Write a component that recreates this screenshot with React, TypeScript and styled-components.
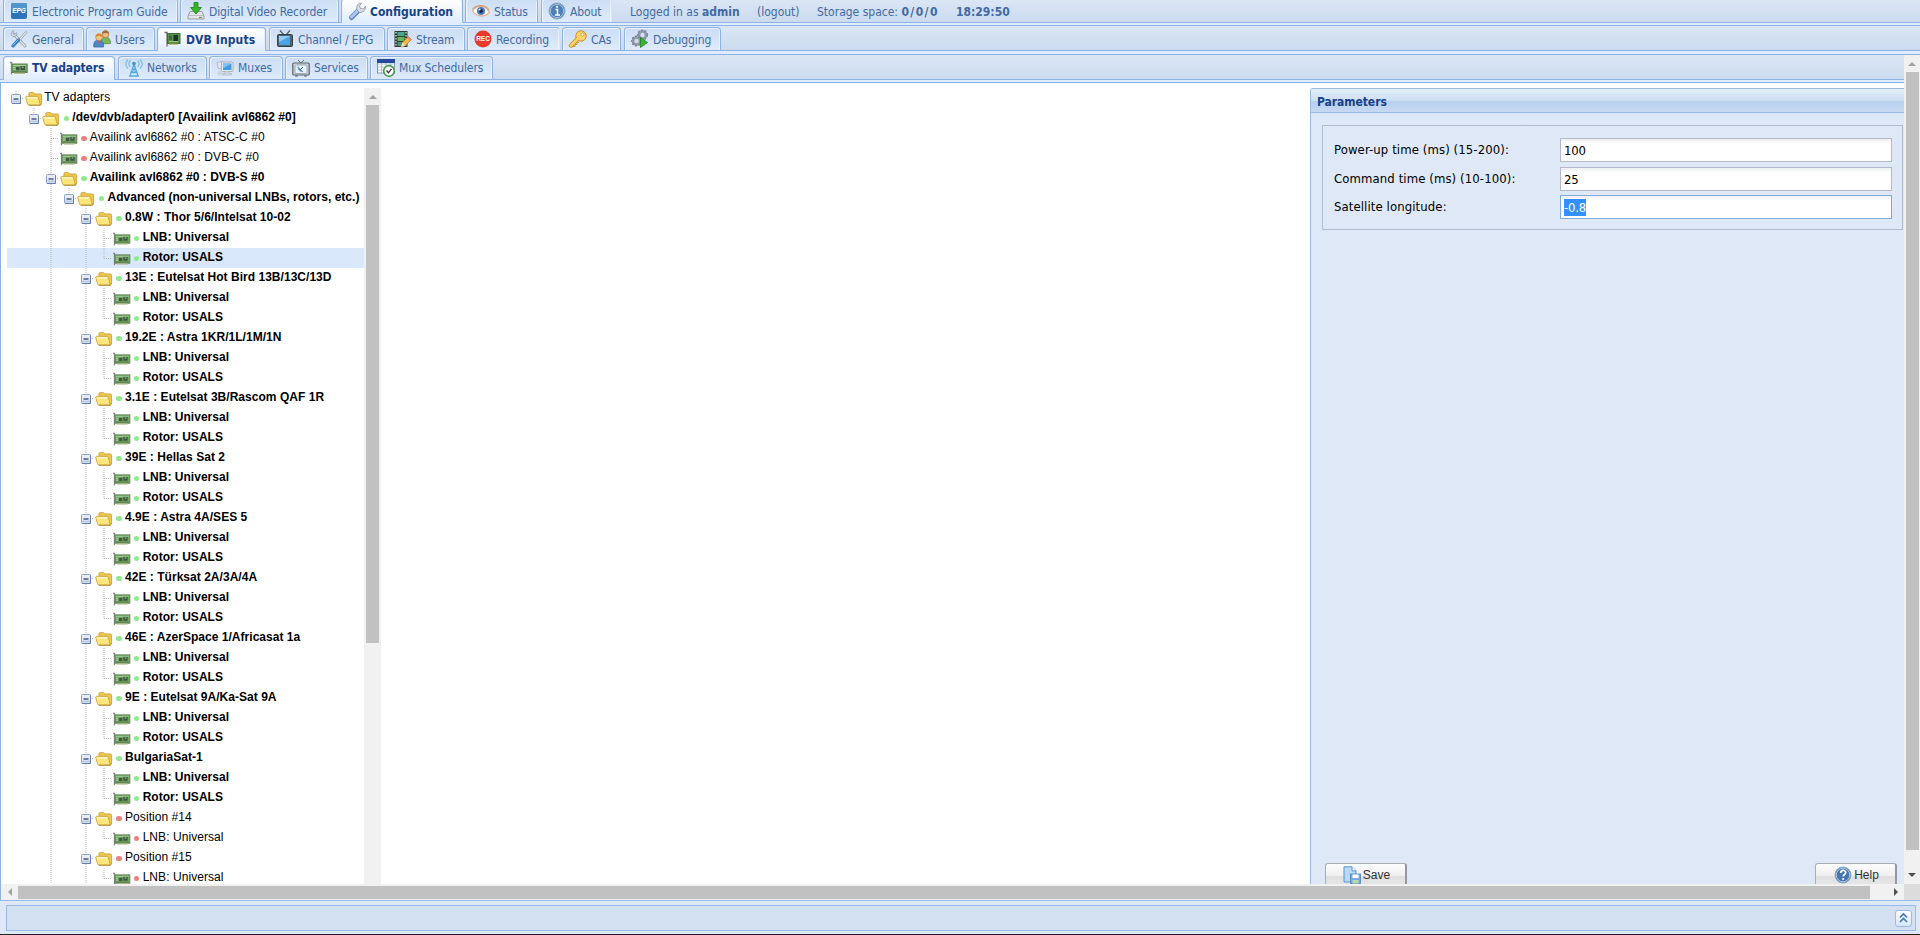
import React from "react";
import styled, { createGlobalStyle, css } from "styled-components";

const Global = createGlobalStyle`
  * { box-sizing: border-box; }
  html, body { margin: 0; padding: 0; overflow: hidden; background: #fff; }
`;

const ui = `"DejaVu Sans Condensed", "DejaVu Sans", sans-serif`;
const treeFont = `"Liberation Sans", Arial, sans-serif`;

const Page = styled.div`
  display: flex;
  flex-direction: column;
  width: 1920px;
  height: 935px;
  overflow: hidden;
  background: #dfe8f6;
  font: 12px ${ui};
`;

const Bar = styled.div<{ $h: number }>`
  display: flex;
  align-items: flex-end;
  flex: none;
  height: ${(p) => p.$h}px;
  padding-left: 3px;
  background: linear-gradient(#dbe6f5, #cbdbef);
  border-bottom: 1px solid #8db2e3;
`;

const Strip = styled.div<{ $h: number }>`
  flex: none;
  height: ${(p) => p.$h}px;
  background: #deecfd;
  border-bottom: 1px solid #8db2e3;
`;

const Tab = styled.div<{ $w: number; $gap: number; $active?: boolean; $h: number; $open?: boolean }>`
  display: flex;
  align-items: center;
  flex: none;
  width: ${(p) => p.$w}px;
  height: ${(p) => p.$h}px;
  margin-right: ${(p) => p.$gap}px;
  padding-left: 6px;
  border: 1px solid #8db2e3;
  border-bottom: 0;
  border-radius: 4px 4px 0 0;
  color: #416aa3;
  white-space: nowrap;
  background: linear-gradient(#ccddf3, #deebfc);
  box-shadow: inset 1px 1px 0 #e9f2fd, inset -1px 0 0 #e9f2fd;
  ${(p) => p.$open && css`border-right-color: transparent;`}
  ${(p) =>
    p.$active &&
    css`
      color: #15428b;
      font-weight: bold;
      height: ${p.$h + 1}px;
      margin-bottom: -1px;
      padding-bottom: 1px;
      background: linear-gradient(#fff, #f4f8fe 40%, #deecfd);
    `}
`;

const TabText = styled.span<{ $ls: number; $low?: boolean }>`
  margin-left: 4px;
  margin-top: ${(p) => (p.$low ? 2 : 0)}px;
  letter-spacing: ${(p) => p.$ls}px;
`;

const Info = styled.div<{ $w: number; $indent?: number }>`
  flex: none;
  width: ${(p) => p.$w}px;
  height: 22px;
  margin-left: ${(p) => p.$indent ?? 0}px;
  line-height: 24px;
  color: #416aa3;
  white-space: nowrap;
`;
const Quota = styled.b`
  letter-spacing: 1.4px;
`;

const Svg = styled.svg`
  flex: none;
  display: block;
  overflow: visible;
`;

const Body = styled.div`
  display: flex;
  flex: none;
  height: 845px;
`;
const Main = styled.div`
  display: flex;
  flex-direction: column;
  width: 1904px;
  height: 845px;
`;
const Content = styled.div`
  display: flex;
  flex: none;
  height: 801px;
  padding-top: 5px;
  background: #fff;
  border-left: 1px solid #8db2e3;
  overflow: hidden;
`;

const Tree = styled.div`
  width: 357px;
  margin-left: 6px;
  flex: none;
  font: 12px ${treeFont};
  color: #000;
`;
const Row = styled.div<{ $sel?: boolean }>`
  display: flex;
  align-items: center;
  height: 20px;
  white-space: nowrap;
  background: ${(p) => (p.$sel ? "#d9e8fb" : "transparent")};
`;
const Cell = styled.div`
  flex: none;
  width: 17.6px;
  height: 20px;
`;
const NodeIcon = styled.div`
  flex: none;
  width: 17.6px;
  padding-top: 1px;
`;
const Dot = styled.span<{ $c: string }>`
  flex: none;
  width: 5.5px;
  height: 5.5px;
  margin: 1px 3.2px 0 3.8px;
  border-radius: 50%;
  background: ${(p) => p.$c};
`;
const Label = styled.span<{ $bold?: boolean; $root?: boolean }>`
  font-weight: ${(p) => (p.$bold ? "bold" : "normal")};
  margin-left: ${(p) => (p.$root ? 2 : 0)}px;
  letter-spacing: ${(p) => (p.$bold ? 0.03 : 0.06)}px;
  line-height: 18px;
  padding-bottom: 2px;
`;

const VScroll = styled.div<{ $w: number; $h: number }>`
  display: flex;
  flex-direction: column;
  align-items: center;
  flex: none;
  width: ${(p) => p.$w}px;
  height: ${(p) => p.$h}px;
  background: #f1f1f1;
`;
const HScroll = styled.div`
  display: flex;
  align-items: center;
  flex: none;
  height: 16px;
  background: #f1f1f1;
  border-left: 1px solid #8db2e3;
`;
const ArrowBox = styled.div<{ $w: number; $h: number }>`
  display: flex;
  align-items: center;
  justify-content: center;
  flex: none;
  width: ${(p) => p.$w}px;
  height: ${(p) => p.$h}px;
`;
const Thumb = styled.div<{ $w: number; $h: number }>`
  flex: none;
  width: ${(p) => p.$w}px;
  height: ${(p) => p.$h}px;
  background: #c1c1c1;
`;
const Grow = styled.div`
  flex: 1;
`;
const Corner = styled.div`
  width: 16px;
  height: 16px;
  background: #dcdcdc;
`;

const Panel = styled.div`
  display: flex;
  flex-direction: column;
  width: 594px;
  height: 820px;
  margin-left: auto;
  border: 1px solid #99bbe8;
  border-right: 0;
  border-top-left-radius: 3px;
  background: #dfe8f6;
`;
const PanelHead = styled.div`
  height: 24px;
  flex: none;
  padding-left: 6px;
  line-height: 26px;
  font-weight: bold;
  letter-spacing: -0.05px;
  color: #15428b;
  background: linear-gradient(#e3effd, #cddef3 50%, #b8cfee 51%, #c6d9f1);
  border-bottom: 1px solid #99bbe8;
`;
const PanelBody = styled.div`
  display: flex;
  flex-direction: column;
  height: 772px;
  padding: 12px 1px 0 11px;
  background: linear-gradient(#dbe7f8, #dfe8f6 12px);
`;
const FieldSet = styled.div`
  display: flex;
  flex-direction: column;
  gap: 4.5px;
  width: 581px;
  height: 105px;
  padding: 12px 10px 0 11px;
  border: 1px solid #b0bbd0;
  font-size: 13px;
`;
const Field = styled.div`
  display: flex;
  height: 24px;
  color: #000;
`;
const FieldName = styled.label`
  width: 226px;
  flex: none;
  line-height: 24px;
  letter-spacing: 0.1px;
`;
const Input = styled.div<{ $focus?: boolean }>`
  display: flex;
  align-items: center;
  width: 332px;
  height: 24px;
  padding: 1px 0 0 3px;
  border: 1px solid ${(p) => (p.$focus ? "#7eadd9" : "#b5b8c8")};
  background: linear-gradient(#eef0f1, #fff 5px);
  letter-spacing: -0.2px;
`;
const Picked = styled.span`
  background: #3390ff;
  color: #fff;
  line-height: 17px;
`;
const Buttons = styled.div`
  display: flex;
  justify-content: space-between;
  margin-top: auto;
  padding: 0 6px 0 3px;
  height: 22px;
  overflow: hidden;
`;
const Button = styled.div`
  display: flex;
  align-items: center;
  justify-content: center;
  gap: 2px;
  width: 82px;
  height: 26px;
  padding: 0 0 3px 2px;
  border: 1px solid #a9adb5;
  border-right: 2px solid #9297a2;
  border-radius: 3px;
  font: 12px ${treeFont};
  color: #333;
  background: linear-gradient(#fdfdfd, #efefef 50%, #dfdfdf 51%, #e8e8e8);
`;

const Footer = styled.div`
  display: flex;
  flex: none;
  height: 34px;
  padding: 4px 4px 3px 6px;
  border-top: 1px solid #99bbe8;
  background: #dfe8f6;
`;
const FooterBox = styled.div`
  display: flex;
  align-items: center;
  justify-content: flex-end;
  width: 1910px;
  height: 26px;
  padding-right: 3px;
  border: 1px solid #99bbe8;
  background: #d2e0f2;
`;
const Expand = styled.div`
  display: flex;
  align-items: center;
  justify-content: center;
  width: 17px;
  height: 17px;
  border: 1px solid #99bbe8;
  border-radius: 3px;
  background: linear-gradient(#fff, #d5e4f7);
`;
const BottomEdge = styled.div`
  flex: none;
  height: 1px;
  background: #1f1f2b;
`;

const art: Record<string, React.ReactNode> = {
  epg: (
    <>
      <rect x="1" y="1" width="16" height="16" rx="2" fill="#2e74b8" />
      <rect x="1" y="1" width="16" height="8" rx="2" fill="#5294cd" />
      <text x="9" y="10.5" textAnchor="middle" fontSize="6.500" fontWeight="bold" fontStyle="italic" fill="#fff" fontFamily="Liberation Sans">EPG</text>
    </>
  ),
  dvr: (
    <>
      <path d="M3 9.500h12l2 4.500v3H1v-3z" fill="#e4e4e6" stroke="#999ca3" />
      <path d="M2 13.500h14" stroke="#bcbec4" />
      <path d="M12 15.500h3" stroke="#58a648" strokeWidth="1.200" />
      <path d="M7 .5h4v5h3.500L9 12 3.500 5.500H7z" fill="#38b52b" stroke="#168013" strokeWidth=".8" />
    </>
  ),
  wrench: (
    <>
      <path d="M3.500 15.500L11 8" stroke="#5b86c0" strokeWidth="5" strokeLinecap="round" />
      <path d="M3.500 15L10.500 8" stroke="#a9c8ee" strokeWidth="3" strokeLinecap="round" />
      <path d="M9 8C8 4 10 1 13.500 1L11.500 4l1 2.500 3 .5L17.500 4c.5 4-2 6.500-6 6.500z" fill="#dadde2" stroke="#8f959e" strokeWidth=".8" />
    </>
  ),
  eye: (
    <>
      <path d="M.5 9C4 3 13 2 17.500 10 14 15.500 5 15.500.5 9z" fill="#fff" stroke="#dfb08a" strokeWidth="1.300" />
      <path d="M.5 7.500C4 2.500 13 2 17 8" fill="none" stroke="#d4a17c" strokeWidth="1.200" />
      <circle cx="9" cy="9" r="4" fill="#4e78bd" />
      <circle cx="9" cy="9" r="1.900" fill="#14264d" />
      <circle cx="7.700" cy="7.600" r=".9" fill="#fff" />
    </>
  ),
  info: (
    <>
      <circle cx="9" cy="9" r="8" fill="#4f7fb8" stroke="#8aa6c8" />
      <circle cx="9" cy="9" r="6.700" fill="none" stroke="#c1d5ea" strokeWidth=".8" />
      <path d="M7.500 7.500h2V13M7 13h5" stroke="#fff" strokeWidth="1.500" fill="none" />
      <circle cx="9" cy="4.800" r="1.100" fill="#fff" />
    </>
  ),
  tools: (
    <>
      <path d="M4 4.500L15 16" stroke="#8b949d" strokeWidth="2.800" strokeLinecap="round" />
      <path d="M4 4.500L15 16" stroke="#e3e7ea" strokeWidth="1.500" strokeLinecap="round" />
      <path d="M3.800.8C.5 1.300.3 5.500 3 6.500c2.500.8 4.500-1.500 3.700-3.700L4.700 4.600 2.800 3.500z" fill="#dbdfe3" stroke="#89929b" strokeWidth=".7" />
      <path d="M8.500 9.500L15.500 1.500l1.500 1-7 8z" fill="#e5e8ea" stroke="#8b949d" strokeWidth=".7" />
      <path d="M8.500 10L3 15.800" stroke="#3d83c9" strokeWidth="3.400" strokeLinecap="round" />
      <path d="M8 10L3 15" stroke="#89bdeb" strokeWidth="1" strokeLinecap="round" />
    </>
  ),
  users: (
    <>
      <path d="M8.500 14c-1-5 1-7 4-7s5 2 5 6.500z" fill="#78b75c" stroke="#4c8a38" strokeWidth=".7" />
      <circle cx="12.500" cy="4.500" r="3.300" fill="#e9bd83" stroke="#986735" strokeWidth=".6" />
      <path d="M9 4c0-5 7-5 7 0-2-1.500-4-1.500-7 0z" fill="#a06c32" />
      <path d="M.8 17c-.5-5 1.500-7 4.700-7s5.500 2 5 7z" fill="#4d87cf" stroke="#2d5e9e" strokeWidth=".7" />
      <path d="M5 10.500l1 5 1.500-5z" fill="#dc5140" />
      <circle cx="6" cy="7.500" r="3.300" fill="#f0c68f" stroke="#a77531" strokeWidth=".6" />
      <path d="M2.500 7c0-5 7-5 7 0-2-1.500-4-1.500-7 0z" fill="#d98f2a" />
    </>
  ),
  card: (
    <>
      <path d="M.5 2.500h2.500v14" fill="none" stroke="#6b6f73" strokeWidth="1.300" />
      <rect x="3.500" y="3.500" width="12.500" height="10" fill="#5b9148" stroke="#3b6d36" />
      <rect x="9.500" y="5" width="4.500" height="6" fill="#1f3325" />
      <rect x="5" y="5.500" width="3" height="4.500" fill="#3f6a3b" />
      <path d="M5 11.500h9" stroke="#9cc886" />
      <path d="M5 14.200h9" stroke="#c9b55d" strokeWidth="1.200" />
    </>
  ),
  nic: (
    <>
      <path d="M0 3.500h1.500V15.500" fill="none" stroke="#85898c" strokeWidth="1.300" />
      <rect x="2" y="5" width="15.200" height="8.500" fill="#79a767" stroke="#5d8159" strokeWidth="1" />
      <path d="M3 6.500h13M3 8.500h2.500M3 10.500h2.500" stroke="#b4d6a0" strokeWidth=".8" />
      <rect x="6" y="8" width="3.500" height="3.200" fill="#3c5941" />
      <rect x="10.500" y="7" width="4.500" height="4" fill="#3c5941" />
      <path d="M12 8.200h1.500" stroke="#c9d6c4" />
      <path d="M3 12.300h13" stroke="#4c6f49" strokeWidth=".8" />
      <path d="M4 14.300h11" stroke="#bdb983" strokeWidth="1.300" />
    </>
  ),
  tv: (
    <>
      <path d="M4 .5L8 5M14 .5L10 5" stroke="#555c64" strokeWidth="1.200" />
      <rect x="1.500" y="4.500" width="15" height="12" rx="1" fill="#50616f" stroke="#35434e" />
      <rect x="3" y="6" width="11" height="9" fill="#4ca3e2" />
      <path d="M3 6h11L3 12z" fill="#93cdf3" />
    </>
  ),
  film: (
    <>
      <rect x=".5" y="1" width="13" height="16" fill="#2f3d33" />
      <path d="M2 2v14M12 2v14" stroke="#e6e9e4" strokeDasharray="1.500 1.500" strokeWidth="1.200" />
      <rect x="3.500" y="2" width="7" height="4" fill="#4aa98b" />
      <rect x="3.500" y="7" width="7" height="4" fill="#61b759" />
      <rect x="3.500" y="12" width="7" height="4" fill="#44947f" />
      <path d="M7 17l1.500-4.500 6-6 3 3-6 6z" fill="#f1b84b" stroke="#ae762b" strokeWidth=".8" />
      <path d="M13 8l3 3 1.500-1.500-3-3z" fill="#e98f86" />
      <path d="M7 17l1.500-4.500 3 3z" fill="#f8e3b9" />
    </>
  ),
  rec: (
    <>
      <circle cx="9" cy="9" r="8.500" fill="#e8392a" />
      <text x="9" y="11.300" textAnchor="middle" fontSize="6.500" fontWeight="bold" fill="#fff" fontFamily="Liberation Sans">REC</text>
    </>
  ),
  key: (
    <>
      <path d="M9.500 8L2 15.500" stroke="#c88f24" strokeWidth="4.500" strokeLinecap="round" />
      <path d="M3 16.500h3v-2h2v-2h2" fill="none" stroke="#cd9629" />
      <circle cx="12" cy="6" r="5.200" fill="#fbd46b" stroke="#c88f24" />
      <path d="M9.500 8L2 15.500" stroke="#fcd265" strokeWidth="2.700" strokeLinecap="round" />
      <circle cx="13.500" cy="4.500" r="1.600" fill="#fff" stroke="#c88f24" strokeWidth=".8" />
    </>
  ),
  gears: (
    <>
      <circle cx="11.500" cy="5" r="3.500" fill="none" stroke="#9297a9" strokeWidth="2.600" />
      <circle cx="11.500" cy="5" r="4.900" fill="none" stroke="#777d92" strokeWidth="1.200" strokeDasharray="2 1.500" />
      <circle cx="5.500" cy="11" r="3.500" fill="#d7d9e3" stroke="#9297a9" strokeWidth="2.600" />
      <circle cx="5.500" cy="11" r="4.900" fill="none" stroke="#777d92" strokeWidth="1.200" strokeDasharray="2 1.500" />
      <path d="M9.500 7.500l7 5-7 5z" fill="#3cb43a" stroke="#1b7f23" strokeWidth=".8" />
    </>
  ),
  antenna: (
    <>
      <path d="M9 5L5 17M9 5l4 12M7 10h4M6 13.500h6.500M7.500 10l5 3.500M10.500 10l-5 3.500M4 17h10" stroke="#55a9de" strokeWidth="1.300" fill="none" />
      <circle cx="9" cy="4.500" r="1.800" fill="#3f94d3" />
      <path d="M5.500 1.500c-2 2-2 4.500 0 6.500M3 .5c-3 3-3 6 0 9M12.500 1.500c2 2 2 4.500 0 6.500M15 .5c3 3 3 6 0 9" stroke="#75bfea" strokeWidth="1.200" fill="none" />
    </>
  ),
  mux: (
    <>
      <path d="M1 3.500l6-1.500-1 8-4-1z" fill="#e2e5e8" stroke="#aeb4bb" strokeWidth=".8" />
      <rect x="5.500" y="3" width="11.500" height="9.500" rx="1" fill="#e7edf4" stroke="#a6b0bb" />
      <rect x="7" y="4.500" width="8.500" height="6.500" fill="#3e9ae2" />
      <path d="M7 4.500h8.500L7 9.500z" fill="#80c2f3" />
      <path d="M9 12.500v2H6.500v1.500h9v-1.500H13v-2" fill="#d3d8de" stroke="#a6b0bb" strokeWidth=".6" />
      <circle cx="4" cy="14" r="2.500" fill="#cfd6de" />
    </>
  ),
  services: (
    <>
      <path d="M6 1l3 3 3-3" fill="none" stroke="#676d74" />
      <rect x=".8" y="4" width="16.400" height="12" rx="1" fill="#d3d9df" stroke="#5a6269" strokeWidth="1.200" />
      <rect x="3" y="6" width="12" height="8.500" rx="1" fill="#e8f3fc" stroke="#8090a0" strokeWidth=".7" />
      <path d="M5.500 7c0 4 2.500 6 6 6z" fill="#4f93cb" />
      <path d="M8 11l3-3" stroke="#35648f" />
      <path d="M3 17h3M12 17h3" stroke="#5a6269" />
    </>
  ),
  schedule: (
    <>
      <rect x=".5" y="1" width="17" height="13" fill="#fff" stroke="#8695b2" />
      <path d="M.5 5h17M.5 8h17M.5 11h17M4.500 2v12M9 2v12M13.500 2v12" stroke="#9fb2d2" strokeWidth=".8" />
      <rect x="0" y="0" width="18" height="4" fill="#284a9e" />
      <circle cx="12" cy="12" r="5.300" fill="#fff" stroke="#4b9a4c" strokeWidth="1.700" />
      <path d="M9.500 11.500l2 2.300 3-4" fill="none" stroke="#323c37" strokeWidth="1.300" />
    </>
  ),
  folder: (
    <>
      <path d="M4 6V4c0-1 .5-1.500 1.500-1.500h3L10 4h5.500c1 0 1.500.5 1.500 1.500V14l-2 1.500z" fill="#efc64c" stroke="#c79b35" strokeWidth=".8" />
      <path d="M.7 7.500c0-.7.300-1 1-1h10.800c.7 0 1 .3 1.200 1l2 7.800H4c-.8 0-1.200-.3-1.400-1z" fill="#fbe67c" stroke="#c79b35" strokeWidth=".8" />
      <path d="M2 8h10.500" stroke="#fffadb" strokeWidth="1.300" />
      <path d="M4 15.700h11.500l1.600-1.500" fill="none" stroke="#b3862a" strokeWidth=".9" />
    </>
  ),
  save: (
    <>
      <path d="M1 .8h8l4 4V16H1z" fill="#b9d9f5" stroke="#5d92cc" />
      <path d="M9 .8v4h4" fill="#fff" stroke="#5d92cc" />
      <rect x="7.500" y="8" width="10" height="9.500" fill="#7ba7df" stroke="#4f80c0" strokeWidth=".8" />
      <rect x="9.500" y="8.500" width="6" height="3.500" fill="#fff" />
      <rect x="9.500" y="14" width="6" height="3.500" fill="#b7dba6" />
    </>
  ),
  help: (
    <>
      <circle cx="9" cy="9" r="8" fill="#4777ae" stroke="#8ba5c5" />
      <circle cx="9" cy="9" r="6.800" fill="none" stroke="#c6d7ea" strokeWidth=".9" />
      <path d="M6.700 7c0-3.500 5-3.500 5-.5 0 2-2.500 2-2.500 4" fill="none" stroke="#fff" strokeWidth="1.700" />
      <circle cx="9.200" cy="13" r="1.100" fill="#fff" />
    </>
  ),
};

const Icon = ({ name, size = 18 }: { name: string; size?: number }) => (
  <Svg width={size} height={size} viewBox="0 0 18 18">{art[name]}</Svg>
);

type Item = { t: string; i: string; w: number; gap?: number; ls?: number; on?: boolean; open?: boolean };

const Tabs = ({ items, h, low }: { items: Item[]; h: number; low?: boolean }) => (
  <>
    {items.map((x) => (
      <Tab key={x.t} $w={x.w} $gap={x.gap ?? 2} $active={x.on} $open={x.open} $h={h}>
        <Icon name={x.i} />
        <TabText $ls={x.ls ?? -0.1} $low={low}>{x.t}</TabText>
      </Tab>
    ))}
  </>
);

const top: Item[] = [
  { t: "Electronic Program Guide", i: "epg", w: 175, ls: -0.07 },
  { t: "Digital Video Recorder", i: "dvr", w: 159 },
  { t: "Configuration", i: "wrench", w: 122, on: true, ls: 0 },
  { t: "Status", i: "eye", w: 73, gap: 3 },
  { t: "About", i: "info", w: 71, open: true },
];
const config: Item[] = [
  { t: "General", i: "tools", w: 81 },
  { t: "Users", i: "users", w: 69 },
  { t: "DVB Inputs", i: "card", w: 109, gap: 3, on: true, ls: 0.12 },
  { t: "Channel / EPG", i: "tv", w: 116 },
  { t: "Stream", i: "film", w: 78 },
  { t: "Recording", i: "rec", w: 93, open: true },
  { t: "CAs", i: "key", w: 59, gap: 3 },
  { t: "Debugging", i: "gears", w: 97 },
];
const dvb: Item[] = [
  { t: "TV adapters", i: "nic", w: 112, gap: 3, on: true, ls: -0.13 },
  { t: "Networks", i: "antenna", w: 89 },
  { t: "Muxes", i: "mux", w: 74 },
  { t: "Services", i: "services", w: 83 },
  { t: "Mux Schedulers", i: "schedule", w: 123 },
];

type Node = { d: number; t: string; on?: boolean; plain?: boolean; leaf?: boolean; last?: boolean; sel?: boolean };

const satellites = [
  "0.8W : Thor 5/6/Intelsat 10-02",
  "13E : Eutelsat Hot Bird 13B/13C/13D",
  "19.2E : Astra 1KR/1L/1M/1N",
  "3.1E : Eutelsat 3B/Rascom QAF 1R",
  "39E : Hellas Sat 2",
  "4.9E : Astra 4A/SES 5",
  "42E : Türksat 2A/3A/4A",
  "46E : AzerSpace 1/Africasat 1a",
  "9E : Eutelsat 9A/Ka-Sat 9A",
  "BulgariaSat-1",
];

const nodes: Node[] = [
  { d: 0, t: "TV adapters", plain: true, last: true },
  { d: 1, t: "/dev/dvb/adapter0 [Availink avl6862 #0]", on: true, last: true },
  { d: 2, t: "Availink avl6862 #0 : ATSC-C #0", leaf: true },
  { d: 2, t: "Availink avl6862 #0 : DVB-C #0", leaf: true },
  { d: 2, t: "Availink avl6862 #0 : DVB-S #0", on: true },
  { d: 3, t: "Advanced (non-universal LNBs, rotors, etc.)", on: true, last: true },
  ...satellites.flatMap((t, i): Node[] => [
    { d: 4, t, on: true },
    { d: 5, t: "LNB: Universal", on: true, leaf: true },
    { d: 5, t: "Rotor: USALS", on: true, leaf: true, last: true, sel: i === 0 },
  ]),
  ...["Position #14", "Position #15"].flatMap((t): Node[] => [
    { d: 4, t },
    { d: 5, t: "LNB: Universal", leaf: true, last: true },
  ]),
];

const Dots = ({ d }: { d: string }) => (
  <path d={d} stroke="#b5b5b5" strokeDasharray="1 1" fill="none" />
);

const Guide = ({ show }: { show: boolean }) => (
  <Cell>
    <Svg width="17.600" height="20">{show && <Dots d="M9 0V20" />}</Svg>
  </Cell>
);

const Joint = ({ n }: { n: Node }) => (
  <Cell>
    <Svg width="17.600" height="20">
      <Dots d={n.d === 0 ? "M9 3V7" : n.last ? "M9 0V10.500" : "M9 0V20"} />
      <Dots d="M9 10.500H17" />
      {!n.leaf && (
        <>
          <rect x="4.500" y="6.500" width="9" height="9" rx="1" fill="#e6ecf6" stroke="#8fa3c4" />
          <path d="M5 13.500h8" stroke="#bccbe2" strokeWidth="2" />
          <path d="M5 15.500h8.500V7.500" stroke="#6580ac" fill="none" />
          <path d="M6.500 11h5" stroke="#1d376b" strokeWidth="1.200" />
        </>
      )}
    </Svg>
  </Cell>
);

const TreeRow = ({ n }: { n: Node }) => (
  <Row $sel={n.sel}>
    {Array.from({ length: n.d }, (_, k) => (
      <Guide key={k} show={(k === 2 && n.d > 2) || (k === 4 && n.d > 4)} />
    ))}
    <Joint n={n} />
    <NodeIcon><Icon name={n.leaf ? "nic" : "folder"} size={17.6} /></NodeIcon>
    {!n.plain && <Dot $c={n.on ? "#90e890" : "#ec7f7f"} />}
    <Label $bold={n.on} $root={n.plain}>{n.t}</Label>
  </Row>
);

const arrows = { up: "M0 4.500L4.500 0 9 4.500z", down: "M0 0h9L4.500 4.500z", left: "M4.500 0v9L0 4.500z", right: "M0 0v9l4.500-4.500z" };
const Arrow = ({ dir, w, h, c = "#505050" }: { dir: keyof typeof arrows; w: number; h: number; c?: string }) => {
  const flat = dir === "up" || dir === "down";
  return (
    <ArrowBox $w={w} $h={h}>
      <Svg width={flat ? 8 : 4} height={flat ? 4 : 8} viewBox={flat ? "0 0 9 4.500" : "0 0 4.500 9"}>
        <path d={arrows[dir]} fill={c} />
      </Svg>
    </ArrowBox>
  );
};

export default function App() {
  return (
    <Page>
      <Global />
      <Bar $h={23}>
        <Tabs items={top} h={24} low />
        <Info $w={127} $indent={16}>Logged in as <b>admin</b></Info>
        <Info $w={60}>(logout)</Info>
        <Info $w={139}>Storage space: <Quota>0/0/0</Quota></Info>
        <Info $w={70}><b>18:29:50</b></Info>
      </Bar>
      <Strip $h={3} />
      <Bar $h={25}>
        <Tabs items={config} h={23} low />
      </Bar>
      <Strip $h={4} />
      <Body>
        <Main>
          <Bar $h={25}>
            <Tabs items={dvb} h={23} />
          </Bar>
          <Strip $h={3} />
          <Content>
            <Tree>
              {nodes.map((n, i) => <TreeRow key={i} n={n} />)}
            </Tree>
            <VScroll $w={17} $h={830}>
              <Arrow dir="up" w={17} h={17} c="#a3a3a3" />
              <Thumb $w={13} $h={538} />
            </VScroll>
            <Panel>
              <PanelHead>Parameters</PanelHead>
              <PanelBody>
                <FieldSet>
                  <Field><FieldName>Power-up time (ms) (15-200):</FieldName><Input>100</Input></Field>
                  <Field><FieldName>Command time (ms) (10-100):</FieldName><Input>25</Input></Field>
                  <Field><FieldName>Satellite longitude:</FieldName><Input $focus><Picked>-0.8</Picked></Input></Field>
                </FieldSet>
                <Buttons>
                  <Button><Icon name="save" />Save</Button>
                  <Button><Icon name="help" />Help</Button>
                </Buttons>
              </PanelBody>
            </Panel>
          </Content>
          <HScroll>
            <Arrow dir="left" w={17} h={16} c="#a3a3a3" />
            <Thumb $w={1852} $h={13} />
            <Grow />
            <Arrow dir="right" w={17} h={16} />
          </HScroll>
        </Main>
        <VScroll $w={16} $h={845}>
          <Arrow dir="up" w={16} h={17} c="#a3a3a3" />
          <Thumb $w={13} $h={778} />
          <Grow />
          <Arrow dir="down" w={16} h={18} />
          <Corner />
        </VScroll>
      </Body>
      <Footer>
        <FooterBox>
          <Expand>
            <Svg width="9" height="10" viewBox="0 0 9 10">
              <path d="M1 4.500L4.500 1 8 4.500M1 9l3.500-3.500L8 9" fill="none" stroke="#3f76b5" strokeWidth="1.600" />
            </Svg>
          </Expand>
        </FooterBox>
      </Footer>
      <BottomEdge />
    </Page>
  );
}
